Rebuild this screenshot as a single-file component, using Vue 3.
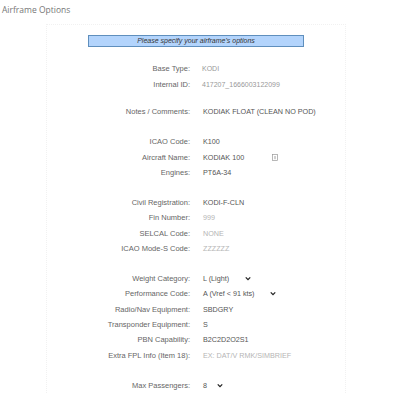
<template>
  <div class="page">
    <div class="title">Airframe Options</div>
    <div class="panel">
      <div class="banner">Please specify your airframe's options</div>

      <div v-for="(group, i) in groups" :key="i" class="group">
        <div v-for="row in group" :key="row.label" class="row">
          <div class="label">{{ row.label }}:</div>
          <div class="value" :class="row.kind">
            <span :style="row.width ? { width: row.width + 'px' } : null" class="text">{{ row.value }}</span>
            <svg v-if="row.kind === 'select'" class="chev" viewBox="0 0 8 6" width="6" height="5">
              <path d="M1 1.5 L4 4.5 L7 1.5" fill="none" stroke="#222" stroke-width="1.7" />
            </svg>
            <svg v-if="row.info" class="info" viewBox="0 0 6 7" width="6" height="7">
              <rect x="0.5" y="0.5" width="5" height="6" fill="none" stroke="#999" stroke-width="0.7" />
              <path d="M3 2 V5.2" stroke="#888" stroke-width="0.8" />
            </svg>
          </div>
        </div>
      </div>
    </div>
  </div>
</template>

<script setup>
const groups = [
  [
    { label: 'Base Type', value: 'KODI', kind: 'muted' },
    { label: 'Internal ID', value: '417207_1666003122099', kind: 'muted' },
  ],
  [{ label: 'Notes / Comments', value: 'KODIAK FLOAT (CLEAN NO POD)', kind: 'input' }],
  [
    { label: 'ICAO Code', value: 'K100', kind: 'input' },
    { label: 'Aircraft Name', value: 'KODIAK 100', kind: 'input', info: true },
    { label: 'Engines', value: 'PT6A-34', kind: 'input' },
  ],
  [
    { label: 'Civil Registration', value: 'KODI-F-CLN', kind: 'input' },
    { label: 'Fin Number', value: '999', kind: 'hint' },
    { label: 'SELCAL Code', value: 'NONE', kind: 'hint' },
    { label: 'ICAO Mode-S Code', value: 'ZZZZZZ', kind: 'hint' },
  ],
  [
    { label: 'Weight Category', value: 'L (Light)', kind: 'select', width: 42 },
    { label: 'Performance Code', value: 'A (Vref < 91 kts)', kind: 'select', width: 67 },
    { label: 'Radio/Nav Equipment', value: 'SBDGRY', kind: 'input' },
    { label: 'Transponder Equipment', value: 'S', kind: 'input' },
    { label: 'PBN Capability', value: 'B2C2D2O2S1', kind: 'input' },
    { label: 'Extra FPL Info (Item 18)', value: 'EX: DAT/V RMK/SIMBRIEF', kind: 'hint' },
  ],
  [{ label: 'Max Passengers', value: '8', kind: 'select', width: 14 }],
]
</script>

<style>
html, body {
  margin: 0;
  background: #fff;
}
</style>

<style scoped>
.page {
  width: 400px;
  height: 400px;
  overflow: hidden;
  box-sizing: border-box;
  padding-top: 3px;
  font-family: "Liberation Sans", Arial, sans-serif;
}
.title {
  padding-left: 2px;
  font-family: "Open Sans", sans-serif;
  font-size: 8.5px;
  line-height: 13px;
  color: #777;
}
.panel {
  width: 300px;
  margin: 8px 0 0 46px;
  padding-top: 10px;
  box-sizing: border-box;
  border-top: 1px dotted #f1f1f1;
  border-left: 1px dotted #f1f1f1;
  border-right: 1px dotted #f1f1f1;
}
.banner {
  width: 216px;
  height: 12px;
  margin-left: 41px;
  box-sizing: border-box;
  background: #b3d4fc;
  border: 1px solid #5f8fbd;
  font-size: 7px;
  font-style: italic;
  line-height: 10px;
  text-align: center;
  color: #333;
}
.group {
  margin-bottom: 14.4px;
}
.banner + .group {
  margin-top: 14px;
  margin-bottom: 12.5px;
}
.row {
  display: flex;
  align-items: center;
  height: 15.4px;
}
.label {
  width: 143px;
  flex: none;
  text-align: right;
  font-size: 7.5px;
  color: #666;
}
.value {
  display: flex;
  align-items: center;
  margin-left: 13px;
  font-size: 7.2px;
  color: #555;
}
.muted {
  margin-left: 12px;
  font-size: 7px;
  color: #999;
}
.hint {
  color: #b5b5b5;
}
.select .text {
  display: inline-block;
}
.chev {
  display: block;
}
.info {
  margin-left: 28px;
}
</style>
